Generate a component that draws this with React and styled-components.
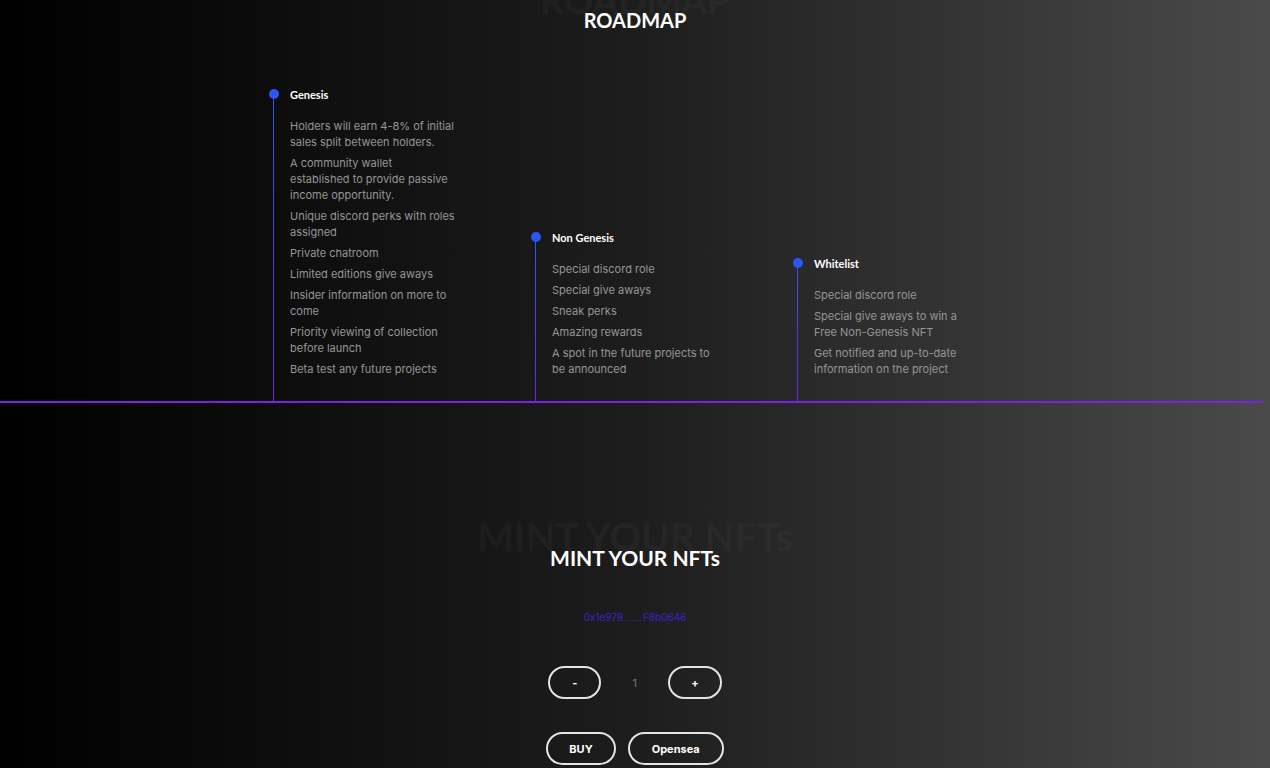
import React from "react";
import styled, { createGlobalStyle } from "styled-components";

const GlobalStyle = createGlobalStyle`
  html, body { margin: 0; padding: 0; }
  body {
    background: #000;
    font-family: "Inter", "Open Sans", sans-serif;
    overflow: hidden;
  }
`;

const Page = styled.div`
  min-height: 100vh;
  background: linear-gradient(to right, #000000 0%, #1d1d1d 50%, #4a4a4a 100%);
  color: #fff;
  display: flex;
  flex-direction: column;
`;

const HeadingWrap = styled.div`
  position: relative;
  display: flex;
  justify-content: center;
  margin-top: ${(p) => p.$top}px;
`;

const Ghost = styled.div`
  position: absolute;
  left: 50%;
  top: ${(p) => p.$offset}px;
  transform: translateX(-50%);
  white-space: nowrap;
  font-family: "Lato", sans-serif;
  font-weight: 700;
  font-size: ${(p) => p.$size}px;
  line-height: 1;
  color: rgba(255, 255, 255, 0.055);
  pointer-events: none;
`;

const Heading = styled.h2`
  position: relative;
  margin: 0;
  font-family: "Lato", sans-serif;
  font-weight: 700;
  font-size: ${(p) => p.$size}px;
  line-height: 1.2;
  color: #fff;
`;

const Timeline = styled.div`
  display: flex;
  align-items: flex-end;
  padding-left: 268px;
  margin-top: ${(p) => p.$top}px;
  margin-right: 7px;
  border-bottom: 2px solid #7b22e6;
`;

const Column = styled.div`
  width: 262px;
  display: flex;
  align-items: stretch;
`;

const Rail = styled.div`
  width: 11px;
  display: flex;
  flex-direction: column;
  align-items: center;
  padding-top: 1px;
`;

const Dot = styled.span`
  width: 10px;
  height: 10px;
  border-radius: 50%;
  background: #2c57f2;
  flex: none;
`;

const RailLine = styled.span`
  flex: 1;
  width: 1.5px;
  margin-top: -2px;
  background: linear-gradient(to bottom, #2c57f2, #6a27e8);
`;

const Content = styled.div`
  margin-left: 11px;
  width: 190px;
  padding-bottom: 24px;
`;

const StageTitle = styled.div`
  font-family: "Lato", sans-serif;
  font-weight: 700;
  font-size: 11px;
  line-height: 14px;
  color: #fff;
  margin-bottom: 16px;
`;

const Items = styled.ul`
  list-style: none;
  margin: 0;
  padding: 0;
  display: flex;
  flex-direction: column;
  gap: 5px;
`;

const Item = styled.li`
  font-size: 11px;
  line-height: 16px;
  color: #969696;
`;

const Line = styled.span`
  display: block;
  white-space: nowrap;
`;

const Mint = styled.div`
  display: flex;
  flex-direction: column;
  align-items: center;
`;

const Address = styled.div`
  margin-top: 39px;
  font-size: 10px;
  line-height: 16px;
  color: #3b23cc;
`;

const Row = styled.div`
  display: flex;
  align-items: center;
  gap: ${(p) => p.$gap}px;
  margin-top: ${(p) => p.$top}px;
`;

const PillButton = styled.button`
  height: 33px;
  min-width: ${(p) => p.$min || 0}px;
  padding: 0 ${(p) => p.$pad || 21}px;
  border: 2px solid #e4e4e4;
  border-radius: 17px;
  background: transparent;
  color: #fff;
  font-family: "Inter", sans-serif;
  font-weight: 700;
  font-size: 11px;
  cursor: pointer;
`;

const Count = styled.span`
  width: 67px;
  text-align: center;
  font-size: 11px;
  color: #777;
`;

const stages = [
  {
    title: "Genesis",
    items: [
      ["Holders will earn 4-8% of initial", "sales split between holders."],
      ["A community wallet", "established to provide passive", "income opportunity."],
      ["Unique discord perks with roles", "assigned"],
      ["Private chatroom"],
      ["Limited editions give aways"],
      ["Insider information on more to", "come"],
      ["Priority viewing of collection", "before launch"],
      ["Beta test any future projects"],
    ],
  },
  {
    title: "Non Genesis",
    items: [
      ["Special discord role"],
      ["Special give aways"],
      ["Sneak perks"],
      ["Amazing rewards"],
      ["A spot in the future projects to", "be announced"],
    ],
  },
  {
    title: "Whitelist",
    items: [
      ["Special discord role"],
      ["Special give aways to win a", "Free Non-Genesis NFT"],
      ["Get notified and up-to-date", "information on the project"],
    ],
  },
];

export default function App() {
  return (
    <Page>
      <GlobalStyle />
      <HeadingWrap $top={8}>
        <Ghost $size={37} $offset={-27}>ROADMAP</Ghost>
        <Heading $size={20}>ROADMAP</Heading>
      </HeadingWrap>
      <Timeline $top={56}>
        {stages.map((s) => (
          <Column key={s.title}>
            <Rail>
              <Dot />
              <RailLine />
            </Rail>
            <Content>
              <StageTitle>{s.title}</StageTitle>
              <Items>
                {s.items.map((lines) => (
                  <Item key={lines.join(" ")}>
                    {lines.map((l) => (
                      <Line key={l}>{l}</Line>
                    ))}
                  </Item>
                ))}
              </Items>
            </Content>
          </Column>
        ))}
      </Timeline>
      <Mint>
        <HeadingWrap $top={142}>
          <Ghost $size={39} $offset={-28}>MINT YOUR NFTs</Ghost>
          <Heading $size={21}>MINT YOUR NFTs</Heading>
        </HeadingWrap>
        <Address>0x1e979.......F8b0646</Address>
        <Row $gap={0} $top={41}>
          <PillButton $min={53}>-</PillButton>
          <Count>1</Count>
          <PillButton $min={53}>+</PillButton>
        </Row>
        <Row $gap={12} $top={33}>
          <PillButton $pad={21}>BUY</PillButton>
          <PillButton $pad={22}>Opensea</PillButton>
        </Row>
      </Mint>
    </Page>
  );
}
